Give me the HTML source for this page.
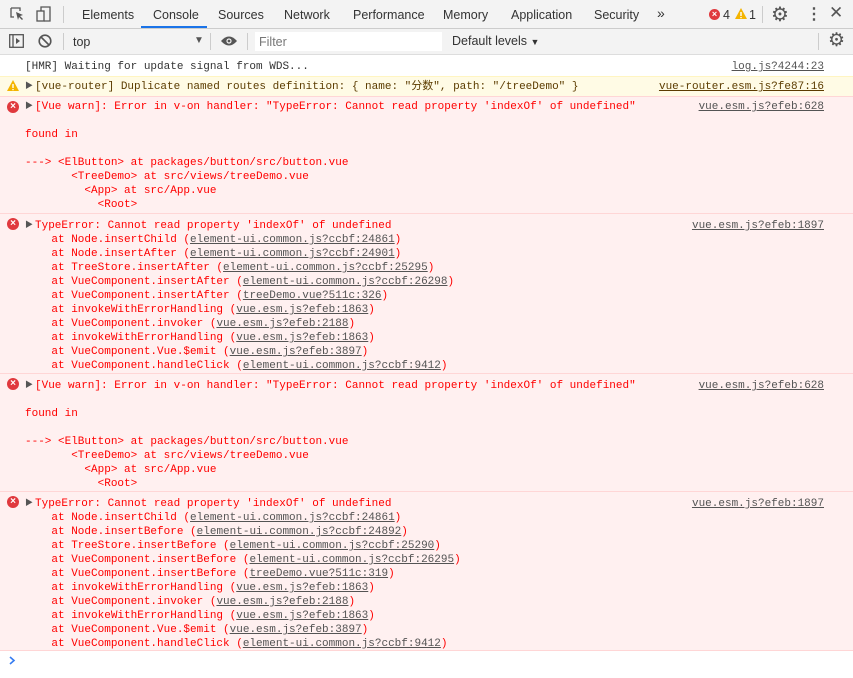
<!DOCTYPE html>
<html><head><meta charset="utf-8"><style>
*{margin:0;padding:0;box-sizing:border-box}
body{width:853px;height:678px;background:#fff;position:relative;overflow:hidden;font-family:"Liberation Sans","Noto Sans CJK SC",sans-serif;font-size:12px;color:#333}
.bar1{position:absolute;left:0;top:0;width:853px;height:29px;background:#f3f3f3;border-bottom:1px solid #ccc}
.bar2{position:absolute;left:0;top:29px;width:853px;height:26px;background:#f3f3f3;border-bottom:1px solid #ddd}
.t{position:absolute;top:8px;font-size:12.5px;color:#333}
.row{position:absolute;left:0;width:853px;font-family:"Liberation Mono","Noto Sans CJK SC",monospace;font-size:11px;line-height:14px;border-top:1px solid #f0f0f0}
.row pre{position:absolute;left:25px;top:5px;font:inherit;white-space:pre}
.err{background:#fff0f0;border-top:1px solid #ffd6d6;color:#f00}
.warn{background:#fffbe5;border-top:1px solid #fff5c2;color:#5c3c00}
.lnk{position:absolute;right:29px;top:5px;color:#545454;text-decoration:underline}
u{color:#545454}
.tri{display:inline-block;width:10px;font-size:8px;color:#555;vertical-align:top}
.ic{position:absolute;left:7px;top:4px;width:12px;height:12px;border-radius:50%;background:#e0393e;color:#fff;font:bold 10px/12px "Liberation Sans";text-align:center}
.sep{position:absolute;width:1px;background:#ccc}
</style></head><body>
<div class="bar1">
<svg style="position:absolute;left:9px;top:6px" width="16" height="16" viewBox="0 0 16 16"><path d="M2 2h9v3M2 2v9h3" fill="none" stroke="#555" stroke-width="1.3"/><path d="M7 6l7 3-3 1 3 3-1 1-3-3-1 3z" fill="#555"/></svg>
<svg style="position:absolute;left:36px;top:5px" width="16" height="18" viewBox="0 0 16 18"><rect x="1" y="6" width="7" height="10" fill="none" stroke="#555" stroke-width="1.3"/><path d="M5 6V2h9v14H8" fill="none" stroke="#555" stroke-width="1.3"/></svg>
<div class="sep" style="left:63px;top:6px;height:17px"></div>
<span class="t" style="left:82px">Elements</span>
<span class="t" style="left:153px">Console</span>
<div style="position:absolute;left:141px;top:26px;width:66px;height:2px;background:#1a73e8"></div>
<span class="t" style="left:218px">Sources</span>
<span class="t" style="left:284px">Network</span>
<span class="t" style="left:353px">Performance</span>
<span class="t" style="left:443px">Memory</span>
<span class="t" style="left:511px">Application</span>
<span class="t" style="left:594px">Security</span>
<span class="t" style="left:657px;font-size:14px;top:5px">»</span>
<div style="position:absolute;left:709px;top:9px;width:11px;height:11px;border-radius:50%;background:#e0393e;color:#fff;font:bold 9px/11px 'Liberation Sans';text-align:center">×</div>
<span class="t" style="left:723px">4</span>
<svg style="position:absolute;left:735px;top:8px" width="12" height="12" viewBox="0 0 12 12"><path d="M6 0L12 11H0z" fill="#f4b400"/><rect x="5.3" y="4" width="1.4" height="4" fill="#fff"/><rect x="5.3" y="9" width="1.4" height="1.2" fill="#fff"/></svg>
<span class="t" style="left:749px">1</span>
<div class="sep" style="left:762px;top:6px;height:17px"></div>
<span style="position:absolute;left:771px;top:2px;font-size:20px;color:#555">⚙</span>
<span style="position:absolute;left:806px;top:4px;font-size:16px;color:#555;font-weight:bold">⋮</span>
<span style="position:absolute;left:829px;top:3px;font-size:17px;color:#555">✕</span>
</div>
<div class="bar2">
<svg style="position:absolute;left:9px;top:5px" width="15" height="14" viewBox="0 0 15 14"><rect x="0.7" y="0.7" width="13.6" height="12.6" fill="none" stroke="#555" stroke-width="1.3"/><path d="M4 1v12" stroke="#555" stroke-width="1.3"/><path d="M7 4l4 3-4 3z" fill="#555"/></svg>
<svg style="position:absolute;left:38px;top:5px" width="14" height="14" viewBox="0 0 14 14"><circle cx="7" cy="7" r="5.8" fill="none" stroke="#555" stroke-width="1.6"/><path d="M3 3l8 8" stroke="#555" stroke-width="1.6"/></svg>
<div class="sep" style="left:63px;top:4px;height:17px"></div>
<span class="t" style="left:73px;top:6px">top</span>
<span style="position:absolute;left:194px;top:6px;font-size:10px;color:#555">▼</span>
<div class="sep" style="left:210px;top:4px;height:17px"></div>
<svg style="position:absolute;left:220px;top:6px" width="18" height="12" viewBox="0 0 18 12"><path d="M1 6Q9-3 17 6Q9 15 1 6z" fill="#555"/><circle cx="9" cy="6" r="2.6" fill="#f3f3f3"/><circle cx="9" cy="6" r="1.4" fill="#555"/></svg>
<div class="sep" style="left:247px;top:4px;height:17px"></div>
<div style="position:absolute;left:255px;top:3px;width:187px;height:19px;background:#fff"></div>
<span class="t" style="left:259px;top:6px;color:#777">Filter</span>
<span class="t" style="left:452px;top:5px">Default levels <span style="font-size:9px">▼</span></span>
<div class="sep" style="left:818px;top:4px;height:17px"></div>
<span style="position:absolute;left:828px;top:0px;font-size:19px;color:#555">⚙</span>
</div>

<div class="row" style="top:55px;height:21px;border-top:none"><pre>[HMR] Waiting for update signal from WDS...</pre><span class="lnk">log.js?4244:23</span></div>

<div class="row warn" style="top:76px;height:20px">
<svg style="position:absolute;left:7px;top:3px" width="12" height="12" viewBox="0 0 12 12"><path d="M6 0L12 11H0z" fill="#f4b400"/><rect x="5.3" y="4" width="1.4" height="4" fill="#fff"/><rect x="5.3" y="9" width="1.4" height="1.2" fill="#fff"/></svg>
<pre style="top:3px"><span class="tri">▶</span>[vue-router] Duplicate named routes definition: { name: "分数", path: "/treeDemo" }</pre><span class="lnk" style="color:#5c3c00;top:3px">vue-router.esm.js?fe87:16</span></div>

<div class="row err" style="top:96px;height:117px"><div class="ic">×</div>
<pre style="top:3px"><span class="tri">▶</span>[Vue warn]: Error in v-on handler: "TypeError: Cannot read property 'indexOf' of undefined"

found in

---&gt; &lt;ElButton&gt; at packages/button/src/button.vue
       &lt;TreeDemo&gt; at src/views/treeDemo.vue
         &lt;App&gt; at src/App.vue
           &lt;Root&gt;</pre><span class="lnk" style="top:3px">vue.esm.js?efeb:628</span></div>

<div class="row err" style="top:213px;height:160px"><div class="ic">×</div>
<pre><span class="tri">▶</span>TypeError: Cannot read property 'indexOf' of undefined
    at Node.insertChild (<u>element-ui.common.js?ccbf:24861</u>)
    at Node.insertAfter (<u>element-ui.common.js?ccbf:24901</u>)
    at TreeStore.insertAfter (<u>element-ui.common.js?ccbf:25295</u>)
    at VueComponent.insertAfter (<u>element-ui.common.js?ccbf:26298</u>)
    at VueComponent.insertAfter (<u>treeDemo.vue?511c:326</u>)
    at invokeWithErrorHandling (<u>vue.esm.js?efeb:1863</u>)
    at VueComponent.invoker (<u>vue.esm.js?efeb:2188</u>)
    at invokeWithErrorHandling (<u>vue.esm.js?efeb:1863</u>)
    at VueComponent.Vue.$emit (<u>vue.esm.js?efeb:3897</u>)
    at VueComponent.handleClick (<u>element-ui.common.js?ccbf:9412</u>)</pre><span class="lnk">vue.esm.js?efeb:1897</span></div>

<div class="row err" style="top:373px;height:118px"><div class="ic">×</div>
<pre><span class="tri">▶</span>[Vue warn]: Error in v-on handler: "TypeError: Cannot read property 'indexOf' of undefined"

found in

---&gt; &lt;ElButton&gt; at packages/button/src/button.vue
       &lt;TreeDemo&gt; at src/views/treeDemo.vue
         &lt;App&gt; at src/App.vue
           &lt;Root&gt;</pre><span class="lnk">vue.esm.js?efeb:628</span></div>

<div class="row err" style="top:491px;height:160px;border-bottom:1px solid #ffd6d6"><div class="ic">×</div>
<pre><span class="tri">▶</span>TypeError: Cannot read property 'indexOf' of undefined
    at Node.insertChild (<u>element-ui.common.js?ccbf:24861</u>)
    at Node.insertBefore (<u>element-ui.common.js?ccbf:24892</u>)
    at TreeStore.insertBefore (<u>element-ui.common.js?ccbf:25290</u>)
    at VueComponent.insertBefore (<u>element-ui.common.js?ccbf:26295</u>)
    at VueComponent.insertBefore (<u>treeDemo.vue?511c:319</u>)
    at invokeWithErrorHandling (<u>vue.esm.js?efeb:1863</u>)
    at VueComponent.invoker (<u>vue.esm.js?efeb:2188</u>)
    at invokeWithErrorHandling (<u>vue.esm.js?efeb:1863</u>)
    at VueComponent.Vue.$emit (<u>vue.esm.js?efeb:3897</u>)
    at VueComponent.handleClick (<u>element-ui.common.js?ccbf:9412</u>)</pre><span class="lnk">vue.esm.js?efeb:1897</span></div>

<svg style="position:absolute;left:9px;top:656px" width="7" height="9" viewBox="0 0 7 9"><path d="M1 1l4 3.5L1 8" fill="none" stroke="#367cf1" stroke-width="1.6"/></svg>
</body></html>
